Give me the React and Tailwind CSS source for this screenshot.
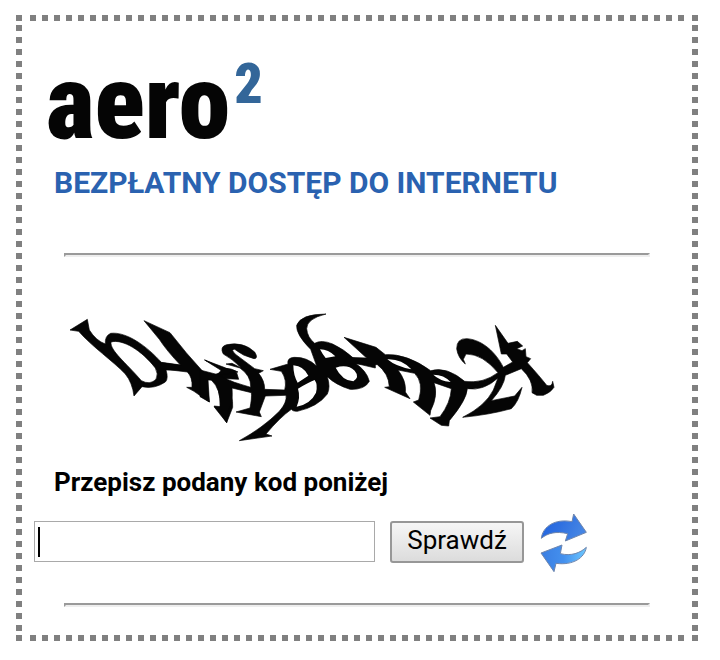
const DOTS_X =
  "h-[6px] mx-2 bg-[repeating-linear-gradient(90deg,#808080_0_6px,transparent_6px_12px)]";
const DOTS_Y =
  "w-[6px] my-1 bg-[repeating-linear-gradient(180deg,#808080_0_6px,transparent_6px_12px)]";
const CORNER = "h-[6px] w-[6px] bg-[#808080]";

function DottedFrame({ children }) {
  return (
    <div className="grid grid-cols-[6px_1fr_6px] grid-rows-[6px_1fr_6px]">
      <div className={CORNER} />
      <div className={DOTS_X} />
      <div className={CORNER} />
      <div className={DOTS_Y} />
      <div className="min-w-0">{children}</div>
      <div className={DOTS_Y} />
      <div className={CORNER} />
      <div className={DOTS_X} />
      <div className={CORNER} />
    </div>
  );
}

function Rule() {
  return (
    <hr className="mx-[42px] h-1 border-2 border-t-[#9a9a9a] border-r-[#eeeeee] border-b-[#eeeeee] border-l-[#9a9a9a]" />
  );
}

function Logo() {
  return (
    <div className="flex items-start pl-6 font-['Roboto_Condensed',Roboto,sans-serif] font-black">
      <span className="text-[104px] leading-[100px] text-[#050505]">aero</span>
      <span className="pl-1 text-[56px] leading-[62px] text-[#336699]">2</span>
    </div>
  );
}

function CodePicture() {
  return (
    <svg
      role="img"
      aria-label="Obrazek z kodem"
      viewBox="0 0 1530 450"
      className="h-[150px] w-[510px] fill-[#050505] stroke-[#050505] stroke-2"
    >
      <g fillRule="evenodd">
        <path d="M30 90L82 58L88 90Q108 122 136 132Q134 108 152 100C200 94 262 140 304 187L362 195L380 210L318 210Q326 236 316 246Q284 268 246 260L222 288Q217 248 196 222C160 184 96 140 56 94Z M153 126C150 152 196 186 244 242Q270 256 288 238Q296 222 286 204C246 152 188 116 153 126Z" />
        <path d="M252 62L330 98Q378 160 430 216L456 228L488 214L456 194L434 180L492 202L530 218L536 238L500 236Q520 290 518 322L500 368L478 334L462 318L482 320Q480 264 460 240L440 240L448 306L402 274L380 262L396 262Q398 232 382 216L300 206L304 188L362 196Q320 152 298 118Z" />
      </g>
      <g transform="translate(420)">
        <path d="M14 180L66 204Q96 204 114 216L54 226Q104 250 152 262Q154 228 120 204L78 192L96 190L124 204Q96 176 70 162Q58 140 80 134Q130 124 164 156Q176 176 162 176Q128 168 104 148Q90 148 108 164L164 206L190 212L176 220Q194 242 194 268L254 270Q262 240 244 214L210 208L264 192Q260 174 282 172Q320 170 350 198L332 148Q288 104 290 76Q302 42 378 42Q320 56 320 86Q322 112 344 130Q364 118 398 132Q432 148 460 174L526 190L526 204L466 190Q500 212 508 244Q494 270 450 268Q406 254 382 230Q392 262 382 282Q354 320 292 334Q278 334 274 328Q240 352 198 402L216 408L118 422Q188 384 238 334Q262 306 258 286L196 288L178 336L184 350L108 336L150 324Q156 294 154 278L96 264Q100 308 84 334L80 368L42 320L60 322Q64 268 34 240L24 238L28 306L0 290V210L54 224L66 206Z" />
        <path className="fill-white stroke-none" d="M280 196Q280 226 293 248L325 227Q312 199 280 196Z M294 266Q302 292 290 320Q332 312 348 278Q354 254 344 240Q324 248 294 266Z M360 148Q367 162 377 174L406 169Q385 148 360 148Z M407 203Q427 242 460 244Q480 231 464 212Q443 192 407 203Z" />
      </g>
      <g transform="translate(870)">
        <path d="M-18 112L78 142L106 164Q170 160 242 212Q290 198 344 244Q398 252 444 218Q398 162 348 162L340 178L346 192Q324 174 320 146Q320 114 352 116C398 120 438 158 460 202L488 186L470 162L454 162L436 76L474 130L502 124L518 138L500 146L516 152L526 146L528 170L542 176L532 188Q570 230 590 256Q606 262 608 244L612 262Q602 278 580 286L560 286L546 278Q552 242 514 206L466 226Q462 260 424 302L494 288L516 262Q506 306 484 326Q420 344 338 352Q406 318 430 270L444 234Q400 274 352 266Q350 300 298 362L296 378L274 376L240 354L270 350Q302 308 304 266L252 248Q266 284 242 332L240 346L190 306L206 300Q222 248 194 220L144 210Q170 244 166 276L180 296L104 262L118 260Q116 220 82 194L-18 190L-10 172L50 174Z" />
        <path className="fill-white stroke-none" d="M112 178Q138 200 184 208Q154 176 112 178Z M250 224Q268 242 302 246Q282 224 250 224Z" />
      </g>
    </svg>
  );
}

function RefreshIcon() {
  return (
    <svg viewBox="0 0 144 180" className="h-[60px] w-12" aria-hidden="true">
      <defs>
        <linearGradient id="arrow-top" x1="0" y1="0" x2="1" y2="0.3">
          <stop offset="0" stopColor="#1f62e0" />
          <stop offset="0.5" stopColor="#2f70e0" />
          <stop offset="1" stopColor="#4585e4" />
        </linearGradient>
        <linearGradient id="arrow-bottom" x1="0" y1="0" x2="1" y2="0">
          <stop offset="0" stopColor="#3a7ee2" />
          <stop offset="0.5" stopColor="#4490ee" />
          <stop offset="1" stopColor="#6cc8ff" />
        </linearGradient>
      </defs>
      <g stroke="#6f86ad" strokeWidth="3" strokeLinejoin="round">
        <path
          fill="url(#arrow-top)"
          d="M4 76C8 40 46 16 96 26L101 3L139 58L76 84L83 62C48 54 24 60 4 76Z"
        />
        <path
          fill="url(#arrow-bottom)"
          d="M139 103C134 134 100 158 48 151L42 176L3 120L66 96L61 122C94 130 120 120 139 103Z"
        />
      </g>
    </svg>
  );
}

export default function App() {
  return (
    <main className="py-[15px] pr-[22px] pl-4 font-[Roboto,sans-serif] text-black">
      <DottedFrame>
        <header className="pt-8">
          <Logo />
          <h1 className="mt-3 pl-8 text-[30px] leading-[36px] font-bold text-[#2a62b0]">
            BEZPŁATNY DOSTĘP DO INTERNETU
          </h1>
        </header>
        <div className="pt-[52px]">
          <Rule />
        </div>
        <form onSubmit={(e) => e.preventDefault()}>
          <div className="pt-[43px] pl-[38px]">
            <CodePicture />
          </div>
          <label htmlFor="code" className="mt-4 block pl-8 text-[26px] leading-8 font-bold">
            Przepisz podany kod poniżej
          </label>
          <div className="mt-[15px] flex items-start pl-3">
            <div className="relative mt-2">
              <input
                id="code"
                type="text"
                autoFocus
                autoComplete="off"
                className="block h-[41px] w-[341px] border border-[#a9a9a9] bg-white px-1 text-[26px] caret-transparent outline-none"
              />
              <span className="absolute top-[6px] left-1 h-[30px] w-[2px] bg-black" aria-hidden="true" />
            </div>
            <button
              type="submit"
              className="mt-2 ml-[15px] h-[42px] w-[134px] rounded-[3px] border-2 border-[#979797] bg-linear-to-b from-[#f6f6f6] to-[#dcdcdc] pb-1 text-[26px] leading-[34px]"
            >
              Sprawdź
            </button>
            <button type="button" aria-label="Odśwież kod" className="ml-4">
              <RefreshIcon />
            </button>
          </div>
        </form>
        <div className="pt-[30px] pb-7">
          <Rule />
        </div>
      </DottedFrame>
    </main>
  );
}
